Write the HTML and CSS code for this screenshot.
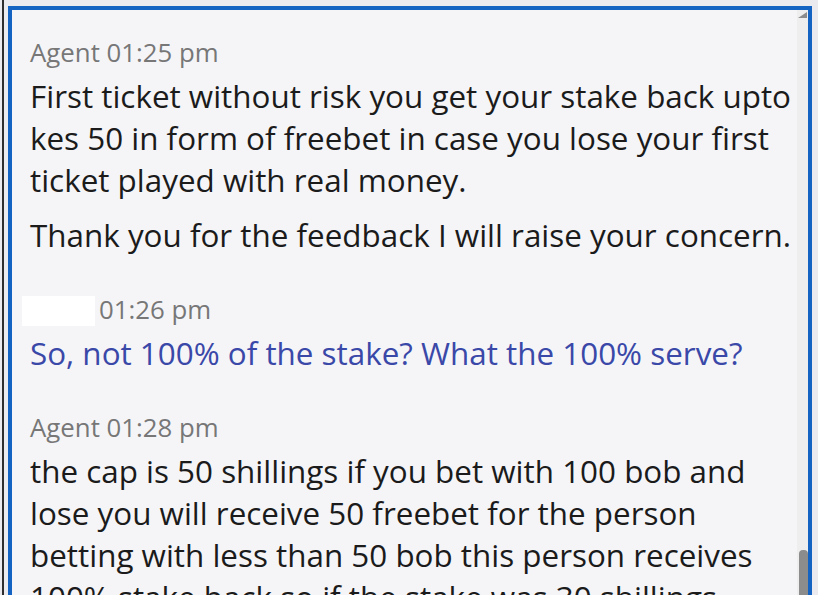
FILE: index.html
```html
<!DOCTYPE html>
<html lang="en">
<head>
    <meta charset="UTF-8">
    <meta name="viewport" content="width=device-width, initial-scale=1.0">
    <title>Chat transcript</title>
    <link rel="stylesheet" href="styles.css">
</head>
<body>
    <div class="screen">
        <div class="edge"></div>
        <div class="frame">
            <div class="chat">
                <div class="msg">
                    <div class="meta">Agent 01:25 pm</div>
                    <p>First ticket without risk you get your stake back upto kes 50 in form of freebet in case you lose your first ticket played with real money.</p>
                    <p>Thank you for the feedback I will raise your concern.</p>
                </div>
                <div class="msg">
                    <div class="meta"><span class="hidden-name"></span>01:26 pm</div>
                    <p class="mine">So, not 100% of the stake? What the 100% serve?</p>
                </div>
                <div class="msg">
                    <div class="meta">Agent 01:28 pm</div>
                    <p>the cap is 50 shillings if you bet with 100 bob and lose you will receive 50 freebet for the person betting with less than 50 bob this person receives 100% stake back so if the stake was 30 shillings<br>you get 30 shillings freebet.</p>
                </div>
            </div>
            <div class="scrollbar">
                <div class="arrow"></div>
                <div class="thumb"></div>
            </div>
        </div>
    </div>
</body>
</html>
```

FILE: styles.css
```css
html, body {
    margin: 0;
    height: 100%;
    overflow: hidden;
}

body {
    background-color: #ebebef;
    font-family: "Open Sans", "Noto Sans", sans-serif;
}

.screen {
    display: flex;
    height: 595px;
    padding: 6px 6px 0 2px;
    box-sizing: border-box;
}

.edge {
    width: 2px;
    background-color: #2e2e2e;
    margin-top: -6px;
    margin-right: 4px;
}

.frame {
    flex: 1;
    display: flex;
    border: 4px solid #1463c2;
    border-bottom: none;
    background-color: #f5f5f8;
    overflow: hidden;
}

.chat {
    flex: 1;
    padding: 26px 0 0 18px;
}

.msg {
    margin-bottom: 37px;
}

.meta {
    font-size: 25.8px;
    line-height: 33px;
    color: #777777;
    margin-bottom: 6px;
}

.hidden-name {
    display: inline-block;
    width: 73px;
    height: 30px;
    margin-left: -8px;
    margin-right: 4px;
    vertical-align: -7px;
    background-color: #ffffff;
}

.msg p {
    margin: 0 0 13px 0;
    font-size: 31.4px;
    line-height: 42px;
    color: #1b1b1b;
}

.msg p:last-child {
    margin-bottom: 0;
}

.msg p.mine {
    color: #3a48a8;
}

.scrollbar {
    width: 11px;
    position: relative;
    background-color: #eeeeee;
}

.arrow {
    position: absolute;
    top: 2px;
    left: 1px;
    width: 0;
    height: 0;
    border-left: 9px solid transparent;
    border-bottom: 6px solid #8c8c8c;
}

.thumb {
    position: absolute;
    top: 540px;
    left: 2px;
    right: 0;
    bottom: 0;
    border-radius: 4px 4px 0 0;
    background-color: #8c8c8c;
}
```
